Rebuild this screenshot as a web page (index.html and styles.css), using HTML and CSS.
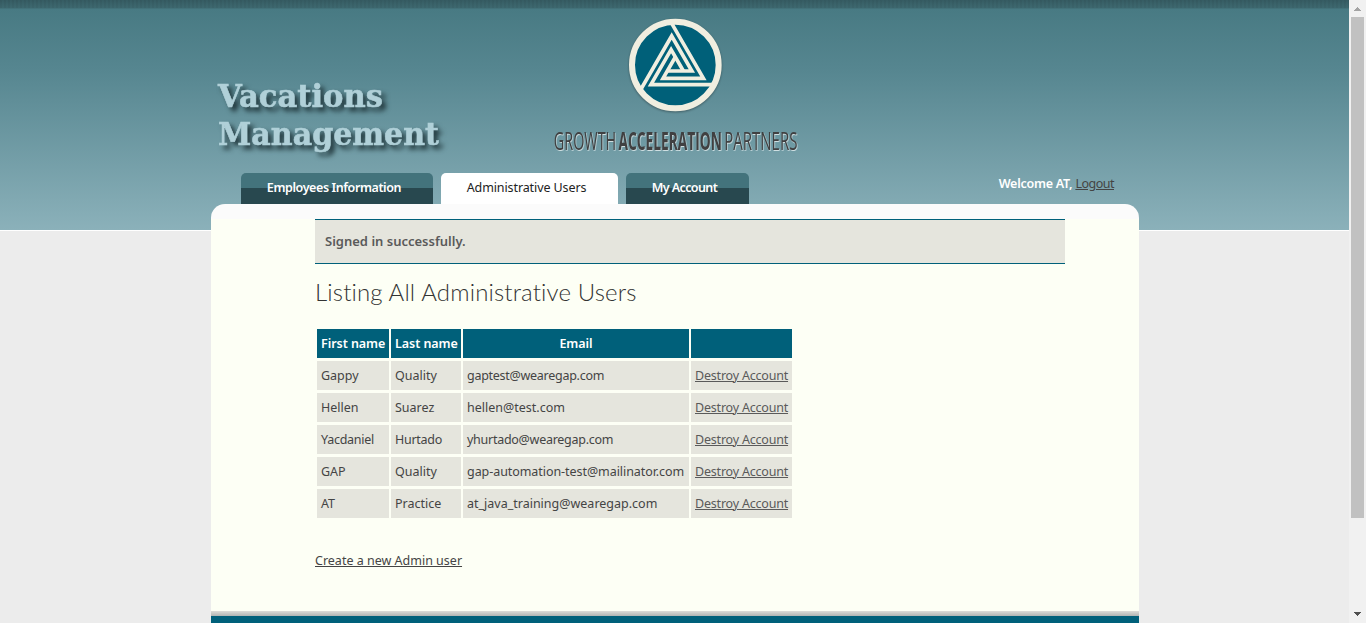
FILE: index.html
```html
<!DOCTYPE html>
<html lang="en">
<head>
<meta charset="utf-8">
<title>Vacations Management</title>
<link rel="stylesheet" href="styles.css">
</head>
<body>
<div class="page">
  <div class="wrap">
    <header class="header">
      <svg class="title" width="240" height="90" viewBox="0 0 240 90">
        <text x="7" y="36" textLength="165" lengthAdjust="spacingAndGlyphs">Vacations</text>
        <text x="7" y="74" textLength="221" lengthAdjust="spacingAndGlyphs">Management</text>
      </svg>
      <div class="brand">
        <svg class="mark" width="110" height="110" viewBox="0 0 330 330">
          <defs><path id="arm" d="M118 55H-73.3L-12.7 -50L24.2 14"/></defs>
          <circle cx="166" cy="165" r="130" fill="#006079" stroke="#f0eee0" stroke-width="18"/>
          <g transform="translate(166 169)" fill="none" stroke="#f0eee0" stroke-width="11">
            <use href="#arm"/>
            <use href="#arm" transform="rotate(120)"/>
            <use href="#arm" transform="rotate(240)"/>
          </g>
        </svg>
        <svg class="company" width="260" height="40" viewBox="0 0 260 40">
          <g transform="scale(.6 1)">
            <text class="thin" x="3" y="29" textLength="104" lengthAdjust="spacingAndGlyphs">GROWTH</text>
            <text class="heavy" x="111" y="29" textLength="172" lengthAdjust="spacingAndGlyphs">ACCELERATION</text>
            <text class="thin" x="287" y="29" textLength="122" lengthAdjust="spacingAndGlyphs">PARTNERS</text>
          </g>
        </svg>
      </div>
    </header>
    <div class="bar">
      <nav class="tabs">
        <a class="tab tab-employees">Employees Information</a>
        <a class="tab tab-admin active">Administrative Users</a>
        <a class="tab tab-account">My Account</a>
      </nav>
      <div class="welcome"><b>Welcome AT,</b> <a>Logout</a></div>
    </div>
    <main class="panel">
      <div class="content">
        <div class="notice">Signed in successfully.</div>
        <h1>Listing All Administrative Users</h1>
        <table>
          <colgroup><col class="c1"><col class="c2"><col class="c3"><col class="c4"></colgroup>
          <tr><th>First name</th><th>Last name</th><th>Email</th><th></th></tr>
          <tr><td>Gappy</td><td>Quality</td><td class="tight">gaptest@wearegap.com</td><td><a>Destroy Account</a></td></tr>
          <tr><td>Hellen</td><td>Suarez</td><td>hellen@test.com</td><td><a>Destroy Account</a></td></tr>
          <tr><td class="tight">Yacdaniel</td><td class="tight">Hurtado</td><td class="tight">yhurtado@wearegap.com</td><td><a>Destroy Account</a></td></tr>
          <tr><td>GAP</td><td>Quality</td><td class="snug">gap-automation-test@mailinator.com</td><td><a>Destroy Account</a></td></tr>
          <tr><td>AT</td><td>Practice</td><td>at_java_training@wearegap.com</td><td><a>Destroy Account</a></td></tr>
        </table>
        <a class="create">Create a new Admin user</a>
      </div>
      <div class="footer"></div>
    </main>
  </div>
</div>
<div class="scroll">
  <svg width="17" height="17"><path d="M5 11h7v-1h-1v-1h-1v-1H9V7H8v1H7v1H6v1H5z" fill="#a3a3a3"/></svg>
  <div class="thumb"></div>
  <svg class="down" width="17" height="17"><path d="M5 6h7v1h-1v1h-1v1H9v1H8V9H7V8H6V7H5z" fill="#505050"/></svg>
</div>
</body>
</html>
```
FILE: styles.css
```css
* { box-sizing: border-box; }
body {
  margin: 0;
  display: flex;
  height: 623px;
  overflow: hidden;
  font-family: "Noto Sans", "Open Sans", sans-serif;
  font-size: 12.5px;
  color: #444;
}
a { text-decoration: underline; text-underline-offset: 1px; }
.page {
  width: 1349px;
  height: 623px;
  background:
    repeating-linear-gradient(90deg, rgba(0,0,0,.04) 0 2px, transparent 2px 4px) 0 0 / 100% 8px no-repeat,
    linear-gradient(#365c63, #3e6970 8px, #487a83 9px, #568690 70px, #8bb1ba 230px, #fff 230px, #fff 231px, #ececec 231px);
}
.wrap { width: 928px; margin-left: 211px; }
.header { height: 173px; display: flex; }
.title { margin-top: 71px; flex: none; overflow: visible; }
.title text {
  font: bold 32px "DejaVu Serif", serif;
  fill: #b0d0d8;
  stroke: #b0d0d8;
  stroke-width: .6px;
  filter: drop-shadow(4px 4px 2.5px rgba(25,45,50,.9));
}
.brand { width: 260px; margin-left: 101px; display: flex; flex-direction: column; }
.mark { margin: 10px 0 0 68px; filter: drop-shadow(0 1px 1px rgba(0,0,0,.35)); }
.company { margin-top: 1px; }
.company text {
  font-family: "Open Sans", sans-serif;
  font-size: 25px;
  fill: #404041;
  filter: drop-shadow(1px 1px 0 #cfdfe2);
}
.company .thin { font-weight: 400; }
.company .heavy { font-weight: 700; }
.bar { display: flex; justify-content: space-between; height: 31px; padding: 0 25px 0 30px; }
.tabs { display: flex; gap: 8px; }
.tab {
  height: 31px;
  line-height: 29px;
  text-align: center;
  text-decoration: none;
  white-space: nowrap;
  border-radius: 5px 5px 0 0;
  color: #fff;
  font-weight: 600;
  background: linear-gradient(#43737c 15px, #28484f 15px);
}
.tab-employees { width: 192px; padding-right: 6px; letter-spacing: -.4px; }
.tab-admin { width: 177px; padding-right: 6px; letter-spacing: -.1px; }
.tab-account { width: 123px; padding-right: 6px; letter-spacing: -.6px; }
.tab.active { background: #fff; color: #222; font-weight: 400; }
.welcome { line-height: 21px; white-space: nowrap; letter-spacing: -.25px; }
.welcome b { color: #fff; font-weight: 600; }
.welcome a { letter-spacing: -.5px; }
.panel {
  height: 419px;
  border-radius: 14px 14px 0 0;
  background: linear-gradient(#fbfbfb 15px, #fdfff5 15px);
  display: flex;
  flex-direction: column;
  justify-content: space-between;
}
.content { margin: 15px 0 0 104px; width: 750px; }
.notice {
  height: 45px;
  line-height: 43px;
  padding-left: 10px;
  background: #e5e5dd;
  border: solid #00607a;
  border-width: 1px 0;
  font-weight: 600;
  font-size: 13px;
  color: #5a5a5a;
}
h1 {
  margin: 11px 0 0;
  height: 51px;
  font: 300 24px/34px Lato, sans-serif;
  letter-spacing: .15px;
  font-variant-ligatures: none;
  color: #333;
  white-space: nowrap;
}
table {
  table-layout: fixed;
  width: 479px;
  border-spacing: 2px 3px;
}
.c1 { width: 72px; }
.c2 { width: 70px; }
.c3 { width: 226px; }
.c4 { width: 101px; }
th, td { height: 29px; padding: 0 4px; line-height: 20px; white-space: nowrap; text-align: left; background: #e5e5dd; }
th { background: #00607a; color: #fff; font-weight: 600; text-align: center; letter-spacing: -.05px; }
td a { color: #5a5a5a; letter-spacing: -.2px; }
.tight { letter-spacing: -.27px; }
.snug { letter-spacing: -.06px; }
.create { display: inline-block; margin-top: 30px; line-height: 20px; }
.footer { height: 12px; background: linear-gradient(#dcdcd8, #b0b4b2 5px, #00607a 5px); }
.scroll { width: 17px; height: 623px; background: #f1f1f1; display: flex; flex-direction: column; flex: none; }
.scroll svg { flex: none; display: block; }
.thumb { height: 501px; margin: 0 2px; background: #c1c1c1; }
.down { margin-top: auto; }
```
